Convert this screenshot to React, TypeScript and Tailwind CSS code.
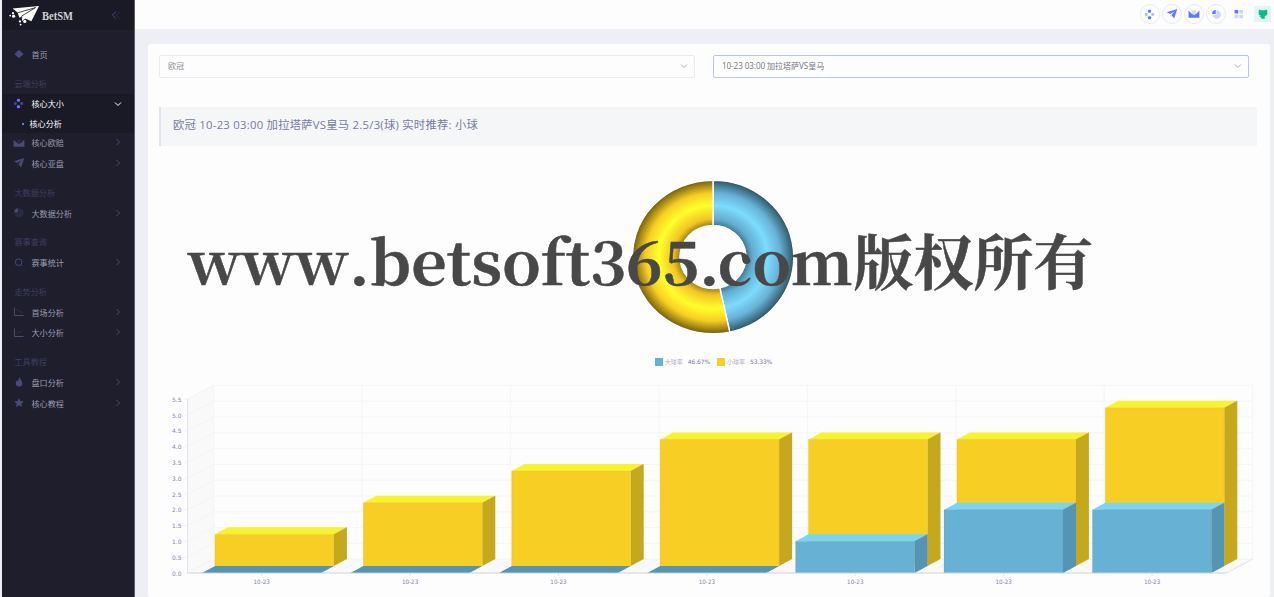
import React from 'react';

type IconProps = { className?: string };

const Svg = ({ className = '', children, box = 12 }: IconProps & { children: React.ReactNode; box?: number }) => (
  <svg viewBox={`0 0 ${box} ${box}`} className={`shrink-0 ${className}`} fill="currentColor">
    {children}
  </svg>
);

const Layers = (p: IconProps) => (
  <Svg {...p}>
    <path d="M6.4 1.2 L10.2 4.7 Q10.6 5.1 10.2 5.5 L6.4 8.8 Q6 9.1 5.6 8.8 L1.8 5.5 Q1.4 5.1 1.8 4.7 L5.6 1.2 Q6 .9 6.4 1.2 Z" />
  </Svg>
);
const Nodes = (p: IconProps) => (
  <Svg {...p}>
    <rect x="4.3" y="0.8" width="3.4" height="3.4" rx="1.2" />
    <rect x="4.3" y="7.8" width="3.4" height="3.4" rx="1.2" />
    <rect x="0.9" y="4.4" width="3.2" height="3.2" rx="1.2" opacity=".5" />
    <rect x="7.9" y="4.4" width="3.2" height="3.2" rx="1.2" opacity=".5" />
  </Svg>
);
const Mail = (p: IconProps) => (
  <Svg {...p}>
    <path d="M3.6 2.4 H8.4 V5 L6 6.8 L3.6 5 Z" opacity=".25" />
    <path d="M0.6 2.6 L3.4 5.6 L6 7 L8.6 5.6 L11.4 2.6 V9.8 H0.6 Z" />
  </Svg>
);
const Plane = (p: IconProps) => (
  <Svg {...p}>
    <path d="M11.2 1 L0.8 4.2 L4.1 6 L8.8 3.2 L5.4 7 L8.2 10.6 Z" />
    <path d="M4 6.7 L5 7.6 L4.2 9.6 Z" opacity=".5" />
  </Svg>
);
const Pie = (p: IconProps) => (
  <Svg {...p}>
    <path d="M6 1.4 A4.6 4.6 0 1 1 1.6 6.2 L6 6.2 Z" opacity=".3" />
    <path d="M5.2 5.4 L1.2 5.4 A4.2 4.2 0 0 1 5.2 1.2 Z" />
  </Svg>
);
const Search = (p: IconProps) => (
  <Svg {...p}>
    <circle cx="5.6" cy="5.2" r="3.3" fill="none" stroke="currentColor" strokeWidth="1" />
    <path d="M7.7 7.9 L8.5 7.1 L10.2 9 L9.4 9.8 Z" opacity=".5" />
  </Svg>
);
const ChartDown = (p: IconProps) => (
  <Svg {...p}>
    <path d="M1.4 1.4 V9.5 H10.6" fill="none" stroke="currentColor" strokeWidth="1" />
    <path d="M3.2 4.2 L5.4 3.8 L7.2 6 L9.8 6.8" fill="none" stroke="currentColor" strokeWidth=".8" opacity=".45" />
  </Svg>
);
const ChartUp = (p: IconProps) => (
  <Svg {...p}>
    <path d="M1.4 1.4 V9.5 H10.6" fill="none" stroke="currentColor" strokeWidth="1" />
    <path d="M3.2 6.8 L5 4.8 L7 5.8 L9.6 3" fill="none" stroke="currentColor" strokeWidth=".8" opacity=".45" />
  </Svg>
);
const Flame = (p: IconProps) => (
  <Svg {...p}>
    <path d="M6.3 1 C6.6 2.8 9.4 4.6 9.4 7.2 A3.3 3.3 0 0 1 2.8 7.2 C2.8 5.8 3.6 5 3.8 4.2 C4.4 4.6 4.7 5 4.8 5.4 C5.6 4.2 5.9 2.6 6.3 1 Z" />
  </Svg>
);
const Star = (p: IconProps) => (
  <Svg {...p}>
    <path d="M6 0.9 L7.4 4.1 L10.9 4.4 L8.3 6.7 L9.1 10.1 L6 8.3 L2.9 10.1 L3.7 6.7 L1.1 4.4 L4.6 4.1 Z" />
  </Svg>
);
const Chevron = ({ className = '' }: IconProps) => (
  <svg viewBox="0 0 8 8" className={`shrink-0 ${className}`} fill="none" stroke="currentColor" strokeWidth="1">
    <path d="M2.5 1 L5.5 4 L2.5 7" />
  </svg>
);

const Section = ({ children }: { children: string }) => (
  <div className="mt-[8px] flex h-[21px] items-center pl-[12.5px] text-[#3f3f60]">{children}</div>
);

const Item = ({ icon, label }: { icon: React.ReactNode; label: string }) => (
  <div className="flex h-[20.6px] items-center pl-[11px] pr-[12px] text-[#9c9db0]">
    <span className="mb-px w-[18.5px] text-[#494b74]">{icon}</span>
    <span className="flex-1">{label}</span>
    <Chevron className="mb-[2px] size-2 text-[#494b74]" />
  </div>
);

const ic = 'size-3';

function Sidebar() {
  return (
    <aside className="ml-[2px] flex w-[133px] shrink-0 flex-col border-r border-[#5b5b69] bg-[#1e1e2d] text-[8.1px] leading-none">
      <div className="flex h-[30px] items-center bg-[#1a1a27] pl-[6px] pr-[13px]">
        <svg viewBox="0 0 32 22" className="h-[22px] w-8" fill="#fff">
          <path d="M31 2 L4.6 4.4 L9.6 8.6 L11.4 13.8 L13.4 12.8 L14.2 17 L17.2 14.6 L23.4 17.2 Z" />
          <path d="M9.6 8.8 L27.5 3.6 L13.8 12 L13.2 16" fill="none" stroke="#1a1a27" strokeWidth=".8" />
          <circle cx="5" cy="9.2" r="1.1" />
          <circle cx="2.2" cy="11.6" r=".9" />
          <circle cx="5.6" cy="12.2" r="1.6" />
          <circle cx="12" cy="17.4" r="1.1" />
          <circle cx="16.8" cy="17.4" r="1.6" />
          <circle cx="12.6" cy="20.6" r=".9" />
        </svg>
        <svg viewBox="0 0 42 26" className="ml-px mt-[2px] h-[26px] w-[42px]">
          <text x="1" y="17" textLength="31" lengthAdjust="spacingAndGlyphs" className="fill-[#d0d0d5] font-['Liberation_Serif',serif] text-[12px] font-bold">BetSM</text>
        </svg>
        <svg viewBox="0 0 10 8" className="ml-auto h-2 w-[10px]" fill="none" strokeWidth="1">
          <path d="M4.8 .6 L1.4 4 L4.8 7.4" stroke="#494b8a" />
          <path d="M8.6 .6 L5.2 4 L8.6 7.4" stroke="#2e2e4a" />
        </svg>
      </div>
      <div className="mt-[14.6px] flex h-[21px] items-center pl-[11px] text-[#9c9db0]">
        <span className="mb-px w-[18.5px] text-[#494b74]"><Layers className={ic} /></span>首页
      </div>
      <Section>云端分析</Section>
      <div className="-mt-px bg-[#1a1a27] text-white">
        <div className="flex h-[20.5px] items-center pl-[11px] pr-[12px]">
          <span className="w-[18.5px] text-[#5d78ff]"><Nodes className="size-[11px]" /></span>
          <span className="flex-1">核心大小</span>
          <Chevron className="size-2 rotate-90" />
        </div>
        <div className="flex h-[19px] items-center pl-[20px]">
          <i className="mr-[5.5px] size-[2px] bg-[#5d78ff]" />核心分析
        </div>
      </div>
      <Item icon={<Mail className={ic} />} label="核心欧赔" />
      <Item icon={<Plane className={ic} />} label="核心亚盘" />
      <Section>大数据分析</Section>
      <Item icon={<Pie className={ic} />} label="大数据分析" />
      <Section>赛事查询</Section>
      <Item icon={<Search className={ic} />} label="赛事统计" />
      <Section>走势分析</Section>
      <Item icon={<ChartDown className={ic} />} label="首场分析" />
      <Item icon={<ChartUp className={ic} />} label="大小分析" />
      <Section>工具教程</Section>
      <Item icon={<Flame className={ic} />} label="盘口分析" />
      <Item icon={<Star className={ic} />} label="核心教程" />
    </aside>
  );
}

function Topbar() {
  const circle = 'flex size-5 items-center justify-center rounded-full border-[1.5px] border-[#e6e9fb]';
  return (
    <header className="flex h-[29px] items-center justify-end gap-[2.2px] bg-[#fdfdfd] pr-[3px] text-[#5d78ff]">
      <span className={circle}><Nodes className="size-[11px]" /></span>
      <span className={circle}><Plane className="size-[12px]" /></span>
      <span className={circle}><Mail className={ic} /></span>
      <span className={circle}><Pie className="size-[11px]" /></span>
      <span className="flex size-5 items-center justify-center">
        <svg viewBox="0 0 10 10" className="size-[10px]" fill="#5d78ff">
          <rect x=".6" y="1" width="3.6" height="3.6" rx=".5" />
          <rect x="5.4" y="1" width="3.6" height="3.6" rx=".5" opacity=".3" />
          <rect x=".6" y="5.7" width="3.6" height="3.6" rx=".5" opacity=".3" />
          <rect x="5.4" y="5.7" width="3.6" height="3.6" rx=".5" opacity=".3" />
        </svg>
      </span>
      <span className="ml-[3.3px] flex h-4 w-[17px] items-center justify-center bg-[#e2f6f1]">
        <svg viewBox="0 0 10 10" className="size-[10px]" fill="#0abb87">
          <path d="M1 .4 L2.8 1.2 H7.2 L9 .4 L9.3 3 V5 Q9 6.8 6.8 7 V9.7 H3.4 V8.4 Q2 8.2 1.4 7.2 L3.2 7 Q1 6.6 .7 5 V3 Z" />
        </svg>
      </span>
    </header>
  );
}

function SelectBox({ text, active = false }: { text: string; active?: boolean }) {
  return (
    <div className={`flex h-[23px] flex-1 items-center justify-between rounded-[2px] border pl-[8px] pr-[6px] text-[8.1px] tracking-[-0.08px] ${active ? 'border-[#b9c4f5] text-[#77777f]' : 'border-[#e9ebf0] text-[#92929a]'}`}>
      {text}
      <Chevron className="size-[8px] rotate-90 text-[#a9acba]" />
    </div>
  );
}

function Donut() {
  const cx = 81, cy = 78, rx = 80.7, ry = 76.8, ix = 33, iy = 31.5;
  const a = 0.4667 * Math.PI * 2;
  const px = (r: number) => (cx + r * Math.sin(a)).toFixed(2);
  const py = (r: number) => (cy - r * Math.cos(a)).toFixed(2);
  return (
    <svg viewBox="0 0 162 156" className="h-[156px] w-[162px]">
      <defs>
        <radialGradient id="blue" gradientUnits="userSpaceOnUse" cx="0" cy="0" r="80" gradientTransform="translate(81 78) scale(1 .95)">
          <stop offset=".4" stopColor="#3f6c84" />
          <stop offset=".5" stopColor="#62add0" />
          <stop offset=".68" stopColor="#7cdcff" />
          <stop offset=".84" stopColor="#67b3d7" />
          <stop offset="1" stopColor="#325a6c" />
        </radialGradient>
        <radialGradient id="gold" gradientUnits="userSpaceOnUse" cx="0" cy="0" r="80" gradientTransform="translate(81 78) scale(1 .95)">
          <stop offset=".4" stopColor="#8f7714" />
          <stop offset=".5" stopColor="#f0c522" />
          <stop offset=".68" stopColor="#ffff2b" />
          <stop offset=".84" stopColor="#f8ce22" />
          <stop offset="1" stopColor="#78640f" />
        </radialGradient>
      </defs>
      <g stroke="#fff" strokeWidth="1.4" strokeLinejoin="round">
        <path fill="url(#blue)" d={`M${cx} ${cy - ry} A${rx} ${ry} 0 0 1 ${px(rx)} ${py(ry)} L${px(ix)} ${py(iy)} A${ix} ${iy} 0 0 0 ${cx} ${cy - iy} Z`} />
        <path fill="url(#gold)" d={`M${cx} ${cy - ry} A${rx} ${ry} 0 1 0 ${px(rx)} ${py(ry)} L${px(ix)} ${py(iy)} A${ix} ${iy} 0 1 1 ${cx} ${cy - iy} Z`} />
      </g>
    </svg>
  );
}

const big = [1, 2, 3, 4, 4, 4, 5];
const small = [0, 0, 0, 0, 1, 2, 2];

function Block({ x, base, value, face, top, side }: { x: number; base: number; value: number; face: string; top: string; side: string }) {
  const w = 119, dx = 13, dy = 7, y = base - value * 31.65;
  if (value === 0) {
    return <path d={`M${x} ${y} l${dx} ${-dy} h${w} l${-dx} ${dy} Z`} fill={side} />;
  }
  return (
    <g>
      <path d={`M${x} ${y} l${dx} ${-dy} h${w} l${-dx} ${dy} Z`} fill={top} />
      <path d={`M${x + w} ${y} l${dx} ${-dy} V${base - dy} l${-dx} ${dy} Z`} fill={side} />
      <rect x={x} y={y} width={w} height={base - y} fill={face} />
      <path d={`M${x} ${base} V${y} H${x + w} V${base} M${x + w} ${y} l${dx} ${-dy}`} fill="none" stroke={side} strokeOpacity=".3" strokeWidth=".6" />
    </g>
  );
}

function BarChart() {
  const left = 39.5, base = 193, step = 148.4, bx = 26.3, by = 13.8, right = left + step * 7;
  const ticks = Array.from({ length: 12 }, (_, i) => i);
  const label = "font-['DejaVu_Sans',sans-serif] text-[6px] fill-[#8486b0]";
  return (
    <svg viewBox="0 0 1122 217" className="block h-[217px] w-[1122px]">
      <path d={`M${left} ${base} V19 L${left + bx} ${19 - by} V${base - by} H${right + bx} L${right} ${base} Z`} fill="#f9f9f9" />
      <rect x={left + bx} y={19 - by} width={step * 7} height="174" fill="#fdfdfd" />
      <g fill="none" stroke="#f2f2f4" strokeWidth=".8">
        {ticks.map((i) => {
          const y = base - i * 15.8;
          return (
            <g key={i}>
              <path d={`M${left - 4} ${y} H${left} L${left + bx} ${y - by} H${right + bx}`} />
              <text x={left - 6} y={y + 2.5} textAnchor="end" stroke="none" textLength="9.4" lengthAdjust="spacingAndGlyphs" className={label}>{(i / 2).toFixed(1)}</text>
            </g>
          );
        })}
        {Array.from({ length: 8 }, (_, i) => (
          <path key={i} d={`M${left + step * i} ${base} l${bx} ${-by} V${19 - by}`} />
        ))}
        <path d={`M${left} 19 V${base} H${right} l${bx} ${-by}`} stroke="#dcdce6" />
      </g>
      {big.map((v, i) => (
        <Block key={i} x={66.9 + step * i} base={186} value={v} face="#f6ce24" top="#f8f42b" side="#c6a81d" />
      ))}
      {small.map((v, i) => (
        <Block key={i} x={54 + step * i} base={base} value={v} face="#67b2d4" top="#79d5f6" side="#5494b4" />
      ))}
      <path d={`M${left} ${base} H${right}`} stroke="#d5dae4" strokeWidth=".8" />
      {big.map((_, i) => (
        <g key={i}>
          <path d={`M${left + step * (i + 0.5)} ${base} v3`} stroke="#dcdce6" strokeWidth=".8" />
          <text x={left + step * (i + 0.5)} y={base + 11.2} textAnchor="middle" textLength="16.4" lengthAdjust="spacingAndGlyphs" className={label}>10-23</text>
        </g>
      ))}
    </svg>
  );
}

export default function App() {
  return (
    <div className="relative flex h-[597px] w-[1274px] overflow-hidden bg-[#eeeef5] font-['Open_Sans','Noto_Sans_CJK_SC',sans-serif]">
      <Sidebar />
      <div className="flex min-w-0 flex-1 flex-col">
        <Topbar />
        <main className="ml-[12.5px] mr-[4.5px] mt-[15px] h-[560px] overflow-hidden rounded-[3px] bg-[#fdfdfd] pl-[11.5px] pr-[12.5px] pt-[11px]">
          <div className="flex gap-[18px] pr-[8px]">
            <SelectBox text="欧冠" />
            <SelectBox text="10-23 03:00 加拉塔萨VS皇马" active />
          </div>
          <div className="mt-[29px] flex h-[39px] items-center border-l-2 border-[#e2e2ee] bg-[#f5f6f8] pb-px pl-[12px] text-[11.3px] tracking-[0.26px] text-[#7779a3]">
            欧冠 10-23 03:00 加拉塔萨VS皇马 2.5/3(球) 实时推荐: 小球
          </div>
          <div className="mt-[33px] flex justify-center pl-[10px]"><Donut /></div>
          <div className="mt-[21px] flex h-3 items-center justify-center pl-[11px] text-[6px] leading-none text-[#7779a3]">
            <i className="mr-[2px] size-[8px] bg-[#67b2d4]" /><span className="mr-[5px] opacity-60">大球率</span>
            <b className="mr-[7px] font-['DejaVu_Sans'] font-normal tracking-[-0.12px]">46.67%</b>
            <i className="mr-[2px] size-[8px] bg-[#fad120]" /><span className="mr-[5px] opacity-60">小球率</span>
            <b className="font-['DejaVu_Sans'] font-normal tracking-[-0.12px]">53.33%</b>
          </div>
          <div className="-ml-[11.5px] mt-[12px]"><BarChart /></div>
        </main>
      </div>
      <svg viewBox="0 0 960 150" className="pointer-events-none absolute left-[160px] top-[190px] h-[150px] w-[960px]">
        <text y="95" stroke="#484848" strokeWidth=".5" className="fill-[#484848] font-['Noto_Serif_CJK_SC','Liberation_Serif','Noto_Sans_CJK_SC',serif] text-[60px] font-bold">
          <tspan x="28" textLength="161" lengthAdjust="spacingAndGlyphs">www</tspan>
          <tspan x="189" textLength="241" lengthAdjust="spacingAndGlyphs">.betsoft</tspan>
          <tspan x="430" textLength="263" lengthAdjust="spacingAndGlyphs">365.com</tspan>
          <tspan x="693.5" textLength="240" lengthAdjust="spacingAndGlyphs">版权所有</tspan>
        </text>
      </svg>
    </div>
  );
}
